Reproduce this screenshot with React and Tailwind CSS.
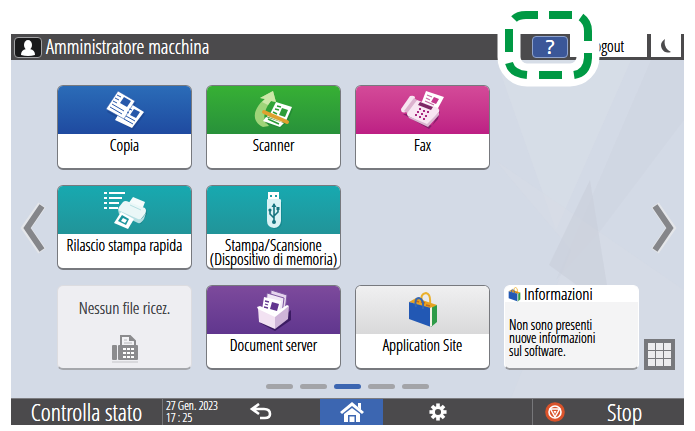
import React from 'react'

const CopyIcon = () => (
  <svg viewBox="0 0 42 40" className="w-[42px] h-[40px]" aria-hidden="true">
    <g fill="#1b3f86" opacity="0.5" transform="translate(1 1)">
      <path d="M13 2 L31 12 L20 31 L2 21Z" />
      <path d="M27 15 L40 23 L28 39 L12 30Z" />
    </g>
    <path d="M27 14 L40 22 L28 38 L11 30 L14 25 L19 27Z" fill="#fff" />
    <path d="M14 1 L31 11 L20 29 L2 19Z" fill="#fff" stroke="#2758aa" strokeWidth="0.600" />
    <path d="M20 7 L27 11 L23 17 L16 13Z" fill="#2758aa" />
    <path d="M13 5 L17 7 M11 8 L15 10 M9 11 L13 13 M8 14 L20 21 M6 17 L18 24" stroke="#2758aa" strokeWidth="1" />
    <path d="M30 19 L36 22 L32 28 L26 25Z" fill="#2758aa" />
    <path d="M25 19 L28 20 M23 22 L25 23 M22 26 L31 31 M20 29 L29 34" stroke="#2758aa" strokeWidth="1" />
  </svg>
)

const ScanIcon = () => (
  <svg viewBox="0 0 42 40" className="w-[42px] h-[40px]" aria-hidden="true">
    <path d="M10 37 C1 33 0 25 4 18 C6 14 9 11 12 9 L7 8 L20 1 L23 12 L18 11 C13 17 10 25 12 31 L16 36Z" fill="#9fd479" />
    <path d="M12 9 L7 8 L20 1 L23 12 L18 11 L15 15 L9 12Z" fill="#cde7a8" />
    <path d="M24 14 L40 19 L35 31 L27 38 L12 33 L17 24Z" fill="#1a7930" opacity="0.5" />
    <path d="M23 12 L39 17 L33 31 L17 24Z" fill="#fff" />
    <path d="M13 27 L31 33 L27 37 L10 31Z" fill="#fff" />
    <path d="M29 18 L35 20 L32 27 L26 25Z" fill="#2c9c36" />
    <path d="M24 16 L28 17 M22 19 L26 20 M20 22 L24 24 M15 29 L26 34" stroke="#2c9c36" strokeWidth="1.500" />
    <path d="M11 22 L34 32" stroke="#dfa12f" strokeWidth="4" strokeLinecap="round" />
    <path d="M14 26 L29 32" stroke="#f4e2b0" strokeWidth="1" />
  </svg>
)

const FaxColorIcon = () => (
  <svg viewBox="0 0 46 40" className="w-[46px] h-[40px]" aria-hidden="true">
    <path d="M3 24 L10 28 L29 39 L38 29 L40 20 L32 36 L8 24Z" fill="#85206a" />
    <path d="M26 1 L44 7 L37 20 L21 14Z" fill="#fff" />
    <path d="M34 7 L39 9 L36 14 L31 12Z" fill="#c53a8e" />
    <path d="M27 5 L32 7 M26 8 L30 10 M25 11 L34 15" stroke="#c86ba5" strokeWidth="1.300" />
    <path d="M10 6 Q15 5 15 8 L6 22 Q1 24 1 19Z" fill="#f7e5f1" />
    <path d="M4 21 L14 8 L17 10 L9 24Z" fill="#dcb2ce" />
    <path d="M17 10 L38 18 Q40 20 39 22 L30 33 Q27 36 24 34 L8 26 Q6 24 8 22Z" fill="#f8e6f2" />
    <path d="M8 26 L27 34 L39 22 L39 25 L28 37 L9 28Z" fill="#dab8d1" />
    <path d="M20 12 L33 17 L31 20 L18 15Z" fill="#7c2865" />
    <path d="M19 19 h2 M23 21 h2 M27 22 h2 M17 22 h2 M21 24 h2 M25 26 h2 M15 25 h2 M19 27 h2 M23 29 h2" stroke="#a9297f" strokeWidth="2" />
  </svg>
)

const QuickPrintIcon = () => (
  <svg viewBox="0 0 44 40" className="w-[44px] h-[40px]" aria-hidden="true">
    <path d="M6 3 H22 M6 8 H19 M6 13 H16 M6 18 H15" stroke="#fff" strokeWidth="2" />
    <path d="M1 3 H4 M1 8 H4 M1 13 H4 M1 18 H4" stroke="#fff" strokeWidth="2" />
    <path d="M17 20 L38 34 L44 24 L43 18Z" fill="#15737b" opacity="0.6" />
    <path d="M30 7 L42 12 L39 20 L25 14Z" fill="#f4fbfb" />
    <path d="M20 12 Q22 10 26 12 L42 18 Q44 20 42 24 L38 29 Q36 31 33 30 L17 22 Q14 20 16 17Z" fill="#eaf7f7" />
    <path d="M15 20 L35 29 Q38 30 40 27 L43 23 L41 29 Q38 34 35 33 L16 24Z" fill="#b5dfe2" />
    <path d="M18 22 L31 29 L25 39 L11 33Z" fill="#fff" />
    <path d="M19 25 L26 29 L23 35 L15 31Z" fill="#1a949c" />
    <path d="M20 28 L24 30 L22 33 L18 31Z" fill="#fff" />
    <path d="M27 15 L38 20" stroke="#b5dfe2" strokeWidth="1" />
  </svg>
)

const UsbIcon = () => (
  <svg viewBox="0 0 18 40" className="w-[18px] h-[40px]" aria-hidden="true">
    <path d="M3 2 H14 V11 H3Z" fill="#fff" />
    <path d="M5 5 H7 V7 H5Z M10 5 H12 V7 H10Z" fill="#1a9da4" />
    <path d="M3 12 H17 V32 Q17 38 10 39 Q4 38 3 32Z" fill="#0e7b84" opacity="0.5" />
    <path d="M2 10 Q2 9 3 9 H14 Q16 9 16 10 V31 Q15 38 9 38 Q2 37 2 31Z" fill="#d9f2f5" />
    <path d="M9 14 V32 M9 28 L5 24 V20 M9 26 L13 22 V18" fill="none" stroke="#14727e" strokeWidth="1.600" />
    <path d="M6.500 17 L9 13 L11.500 17Z" fill="#14727e" />
    <circle cx="9" cy="32" r="2" fill="#14727e" />
    <circle cx="5" cy="20" r="1.600" fill="#14727e" />
    <path d="M11.500 17 H14.500 V20 H11.500Z" fill="#14727e" />
  </svg>
)

const ServerIcon = () => (
  <svg viewBox="0 0 38 42" className="w-[38px] h-[42px]" aria-hidden="true">
    <path d="M5 34 L20 42 L36 31 V21 L20 35Z" fill="#3c1c63" />
    <path d="M16 1 L32 6 L30 22 L15 16Z" fill="#e4d3ec" stroke="#7d55a0" strokeWidth="1" />
    <path d="M12 4 L29 9 L27 25 L11 18Z" fill="#f1e8f6" stroke="#7d55a0" strokeWidth="1" />
    <path d="M9 8 L26 12 L23 28 L7 21Z" fill="#fff" />
    <path d="M17 13 L24 15 L22 22 L15 20Z" fill="#62368f" />
    <path d="M10 12 L14 13 M10 15 L13 16 M9 18 L13 19 M9 21 L20 25" stroke="#62368f" strokeWidth="1.300" />
    <path d="M3 19 L20 26 L20 40 L4 33Z" fill="#f2e2f2" />
    <path d="M20 26 L34 17 L33 30 L20 40Z" fill="#cfb5d8" />
    <path d="M2 18 L5 17 L20 24 L32 16 L34 17 L20 28 L3 20Z" fill="#fff" />
  </svg>
)

const BagIcon = ({ className }) => (
  <svg viewBox="0 0 30 36" className={className} aria-hidden="true">
    <path d="M14 9 Q12 2 18 1 Q23 2 22 12" fill="none" stroke="#eab02c" strokeWidth="2" />
    <path d="M1 10 L8 6 L29 13 L23 17Z" fill="#e8a321" />
    <path d="M8 9 L11 10 M13 10 L17 11 M18 13 L22 14" stroke="#c4661e" strokeWidth="1.500" />
    <path d="M1 10 L23 16 V35 L1 27Z" fill="#2258b4" />
    <path d="M23 16 L29 13 V30 L23 35Z" fill="#2e9b48" />
    <path d="M22 16 L24 15 V34 L22 35Z" fill="#f3f3e4" />
    <path d="M8 15 Q6 6 11 6 Q16 7 15 17" fill="none" stroke="#3867ae" strokeWidth="2" />
  </svg>
)

const FaxGrayIcon = () => (
  <svg viewBox="0 0 28 28" className="w-[28px] h-[28px]" aria-hidden="true">
    <path d="M10 11 V1 H19 L24 6 V11" fill="#f2f2f5" stroke="#8b8b8e" strokeWidth="2" />
    <path d="M18 1 V6 H24" fill="#8b8b8e" />
    <path d="M13 5 H16 M13 8 H21" stroke="#b9b9bc" strokeWidth="1" />
    <rect x="1" y="10" width="5" height="15" rx="1" fill="#8b8b8e" />
    <rect x="7" y="10" width="20" height="15" rx="1" fill="#8b8b8e" />
    <path d="M12 14 h3 M16 14 h3 M20 14 h3 M12 18 h3 M16 18 h3 M20 18 h3 M12 22 h3 M16 22 h3 M20 22 h3" stroke="#fff" strokeWidth="2" />
    <path d="M1 27 H27" stroke="#c4c4c8" strokeWidth="1" />
  </svg>
)

const BackIcon = () => (
  <svg viewBox="0 0 24 18" className="w-[24px] h-[18px]" aria-hidden="true">
    <path d="M10 1 L3 6 L10 11 M3 6 H15 Q21 6 21 11 Q21 15 16 15 H11" fill="none" stroke="#fff" strokeWidth="2.600" />
  </svg>
)

const HomeIcon = () => (
  <svg viewBox="0 0 26 22" className="w-[26px] h-[22px]" aria-hidden="true">
    <path d="M13 1 L25 11 L23 13 L13 5 L3 13 L1 11Z" fill="#fff" />
    <path d="M19 2 H22 V9 L19 6Z" fill="#fff" />
    <path d="M13 7 L21 13 V21 H17 V14 H9 V21 H5 V13Z" fill="#fff" />
    <path d="M10.500 15.500 H15.500 V21 H10.500Z" fill="#fff" />
  </svg>
)

const GearIcon = () => (
  <svg viewBox="-10 -10 20 20" className="w-[18px] h-[18px]" aria-hidden="true">
    <circle r="5" fill="none" stroke="#fff" strokeWidth="3.200" />
    {[0, 45, 90, 135, 180, 225, 270, 315].map((a) => (
      <rect key={a} x="-2" y="-9.500" width="4" height="4" fill="#fff" transform={`rotate(${a})`} />
    ))}
  </svg>
)

const StopIcon = () => (
  <svg viewBox="0 0 20 20" className="w-[20px] h-[20px]" aria-hidden="true">
    <circle cx="10" cy="10" r="9.800" fill="#d9532b" />
    <circle cx="10" cy="10" r="6" fill="none" stroke="#fff" strokeWidth="1.600" />
    <path d="M5.500 7 H14.500 L10 15Z" fill="none" stroke="#fff" strokeWidth="1.500" />
    <path d="M8.500 9 H11.500 L10 12Z" fill="#fff" />
  </svg>
)

const Arrow = ({ flip }) => (
  <svg viewBox="0 0 28 54" className={flip ? 'w-[28px] h-[54px] -scale-x-100' : 'w-[28px] h-[54px]'} aria-hidden="true">
    <path d="M23 4 L7 27 L23 50" fill="none" stroke="#e4e6ea" strokeWidth="9" />
    <path d="M23 5 L8 27 L23 49" fill="none" stroke="#85868a" strokeWidth="6" />
  </svg>
)

// white band with green dashes drawn around the help button
const HelpHighlight = () => (
  <svg viewBox="0 0 104 92" className="absolute -left-[35px] -top-[36px] w-[104px] h-[92px] max-w-none z-10 pointer-events-none" aria-hidden="true">
    <rect x="12" y="17" width="79" height="60" rx="18" fill="none" stroke="#fff" strokeWidth="23" />
    <g fill="none" stroke="#009944" strokeWidth="8">
      <path d="M17 21 Q21 17 29 17 H41" />
      <path d="M52 17 H75" />
      <path d="M84 19 Q91 24 91 33 V43" />
      <path d="M91 55 V60 Q90 75 77 77" />
      <path d="M42 77 H65" />
      <path d="M30 77 Q15 76 12 65" />
      <path d="M12 31 V54" />
    </g>
  </svg>
)

const apps = [
  { label: 'Copia', icon: <CopyIcon />, top: 'bg-linear-to-b from-[#2b6cb8] to-[#1f4aa0]' },
  { label: 'Scanner', icon: <ScanIcon />, top: 'bg-linear-to-b from-[#37b034] to-[#28913a]' },
  { label: 'Fax', icon: <FaxColorIcon />, top: 'bg-linear-to-b from-[#d44a98] to-[#bd1f84]' },
  null,
  { label: 'Rilascio stampa rapida', icon: <QuickPrintIcon />, top: 'bg-linear-to-b from-[#17a9b0] to-[#219499]' },
  { label: <>Stampa/Scansione<br />(Dispositivo di memoria)</>, icon: <UsbIcon />, top: 'bg-linear-to-b from-[#17a9b0] to-[#219499]' },
  null,
  null,
]

const moreApps = [
  { label: 'Document server', icon: <ServerIcon />, top: 'bg-linear-to-b from-[#7d4a9c] to-[#60368e]' },
  { label: 'Application Site', icon: <BagIcon className="w-[30px] h-[36px]" />, top: 'bg-linear-to-b from-[#f0f0f1] to-[#d9d9da]' },
]

const AppTile = ({ app }) => (
  <button className="flex flex-col rounded-md bg-white border border-[#77797e] border-b-2 text-black">
    <span className={`flex h-12 w-full shrink-0 items-center justify-center rounded-t-[5px] ${app.top}`}>{app.icon}</span>
    <span className="w-full pt-1 text-[16px] leading-[14px] text-center whitespace-nowrap">{app.label}</span>
  </button>
)

const Header = () => (
  <header className="flex h-[26px] bg-[#4b4a4c] text-white">
    <div className="flex flex-1 items-center gap-1 pl-[3px]">
      <span className="flex h-[21px] w-[28px] items-end justify-center rounded-sm border border-[#a2a2a4] bg-[#1a1a1b]">
        <svg viewBox="0 0 16 18" className="w-[16px] h-[18px]" aria-hidden="true">
          <ellipse cx="8" cy="6" rx="4" ry="5" fill="#fff" />
          <path d="M1 16 Q1 11 6 10 H10 Q15 11 15 16 Q8 18 1 16Z" fill="#fff" />
        </svg>
      </span>
      <h1 className="text-[20px] leading-6 whitespace-nowrap">Amministratore macchina</h1>
    </div>
    <div className="relative mr-[2px] pt-[2px]">
      <button aria-label="Guida" className="block h-[22px] w-[36px] rounded-sm border border-[#8fa3cc] bg-[#3b5798] font-['Noto_Sans',sans-serif] text-[20px] leading-5">?</button>
      <HelpHighlight />
    </div>
    <button className="h-[23px] w-[77px] bg-white pr-1 text-[16px] text-black">Logout</button>
    <button aria-label="Risparmio energia" className="ml-1 mr-[3px] flex h-[23px] w-[30px] items-center justify-center bg-white">
      <svg viewBox="0 0 12 16" className="w-[12px] h-[16px]" aria-hidden="true">
        <path d="M5 1 Q-1 5 2 11 Q5 16 11 14 Q3 10 5 1Z" fill="#4b4a4c" />
      </svg>
    </button>
  </header>
)

const Footer = () => (
  <footer className="flex h-[27px] items-stretch border-t border-[#7c7c80] bg-[#4b4a4c] text-white">
    <button className="w-[152px] border-r border-[#77777a] text-[24px] leading-6 whitespace-nowrap">Controlla stato</button>
    <time className="w-[58px] pl-[3px] pt-px text-[12px] leading-3 whitespace-nowrap">27 Gen. 2023<br />17 : 25</time>
    <nav className="grid flex-1 grid-cols-[2fr_63px_3fr]">
      <button aria-label="Indietro" className="flex items-center pl-7"><BackIcon /></button>
      <button aria-label="Home" className="flex items-center justify-center bg-[#3c66b1]"><HomeIcon /></button>
      <button aria-label="Impostazioni" className="flex items-center pl-[46px]"><GearIcon /></button>
    </nav>
    <button className="flex w-[152px] items-center gap-[42px] border-l border-[#77777a] pl-3 text-[24px] leading-6">
      <StopIcon />
      Stop
    </button>
  </footer>
)

const App = () => {
  return (
    <div className="bg-white px-[11px] pt-[34px] pb-[6px] font-['Open_Sans_Condensed_Light','Open_Sans_Condensed',sans-serif] [text-shadow:0_0_0_currentColor] [&_button]:[text-shadow:0_0_0_currentColor]">
      <Header />
      <main className="relative bg-[#d3dae6]">
        <svg viewBox="0 0 673 338" preserveAspectRatio="none" className="absolute inset-0 h-full w-full" aria-hidden="true">
          <path d="M485 0 H620 L545 170 Z" fill="#dbe0e9" opacity="0.4" />
          <path d="M640 0 L545 220 L590 170 L673 60 V0Z" fill="#ccd2df" opacity="0.4" />
          <path d="M484 100 L560 190 L500 338 H673 V230Z" fill="#d7dce6" opacity="0.5" />
          <path d="M579 120 L538 205 L600 250Z" fill="#c9cfdb" opacity="0.6" />
        </svg>

        <div className="relative flex pt-[25px]">
          <button aria-label="Pagina precedente" className="flex w-[46px] items-center pl-2"><Arrow /></button>

          <div className="grid flex-1 grid-cols-4 auto-rows-[85px] gap-x-[14px] gap-y-[15px]">
            {apps.map((app, i) => (app ? <AppTile key={i} app={app} /> : <span key={i} />))}

            <button className="flex flex-col items-center justify-between rounded-md border border-[#dcdce0] border-b-2 border-b-[#a5a7ac] bg-[#eeeef2] pt-[12px] pb-[5px] text-[17px] leading-5 text-[#404145]">
              Nessun file ricez.
              <FaxGrayIcon />
            </button>

            {moreApps.map((app) => <AppTile key={app.label} app={app} />)}

            <section className="rounded-md border border-white border-b-2 border-b-[#98999d] bg-[#f4f4f5] text-black">
              <h2 className="flex h-4 items-center gap-[3px] rounded-t-[5px] bg-white pl-[3px] text-[17px] leading-4">
                <BagIcon className="w-[13px] h-[15px]" />
                Informazioni
              </h2>
              <p className="px-1 pt-4 text-[14px] leading-[13px]">
                Non sono presenti<br />nuove informazioni<br />sul software.
              </p>
            </section>
          </div>

          <div className="grid w-[45px] grid-rows-3 gap-y-[15px]">
            <button aria-label="Pagina successiva" className="row-start-2 flex items-center justify-end pr-[6px]"><Arrow flip /></button>
            <button aria-label="Elenco applicazioni" className="row-start-3 ml-[5px] grid h-[31px] w-[31px] grid-cols-3 gap-px self-end border-4 border-[#77787c] bg-[#77787c]">
              {[...Array(9)].map((_, i) => <span key={i} className="bg-[#ececee]" />)}
            </button>
          </div>
        </div>

        <div className="relative flex justify-center gap-[7px] pt-[14px] pb-[9px]">
          {[0, 1, 2, 3, 4].map((i) => (
            <span key={i} className={i === 2 ? 'h-[5px] w-[27px] rounded-full bg-[#3c66b1]' : 'h-[5px] w-[27px] rounded-full bg-[#a3a4a8]'} />
          ))}
        </div>
      </main>
      <Footer />
    </div>
  )
}

export default App
